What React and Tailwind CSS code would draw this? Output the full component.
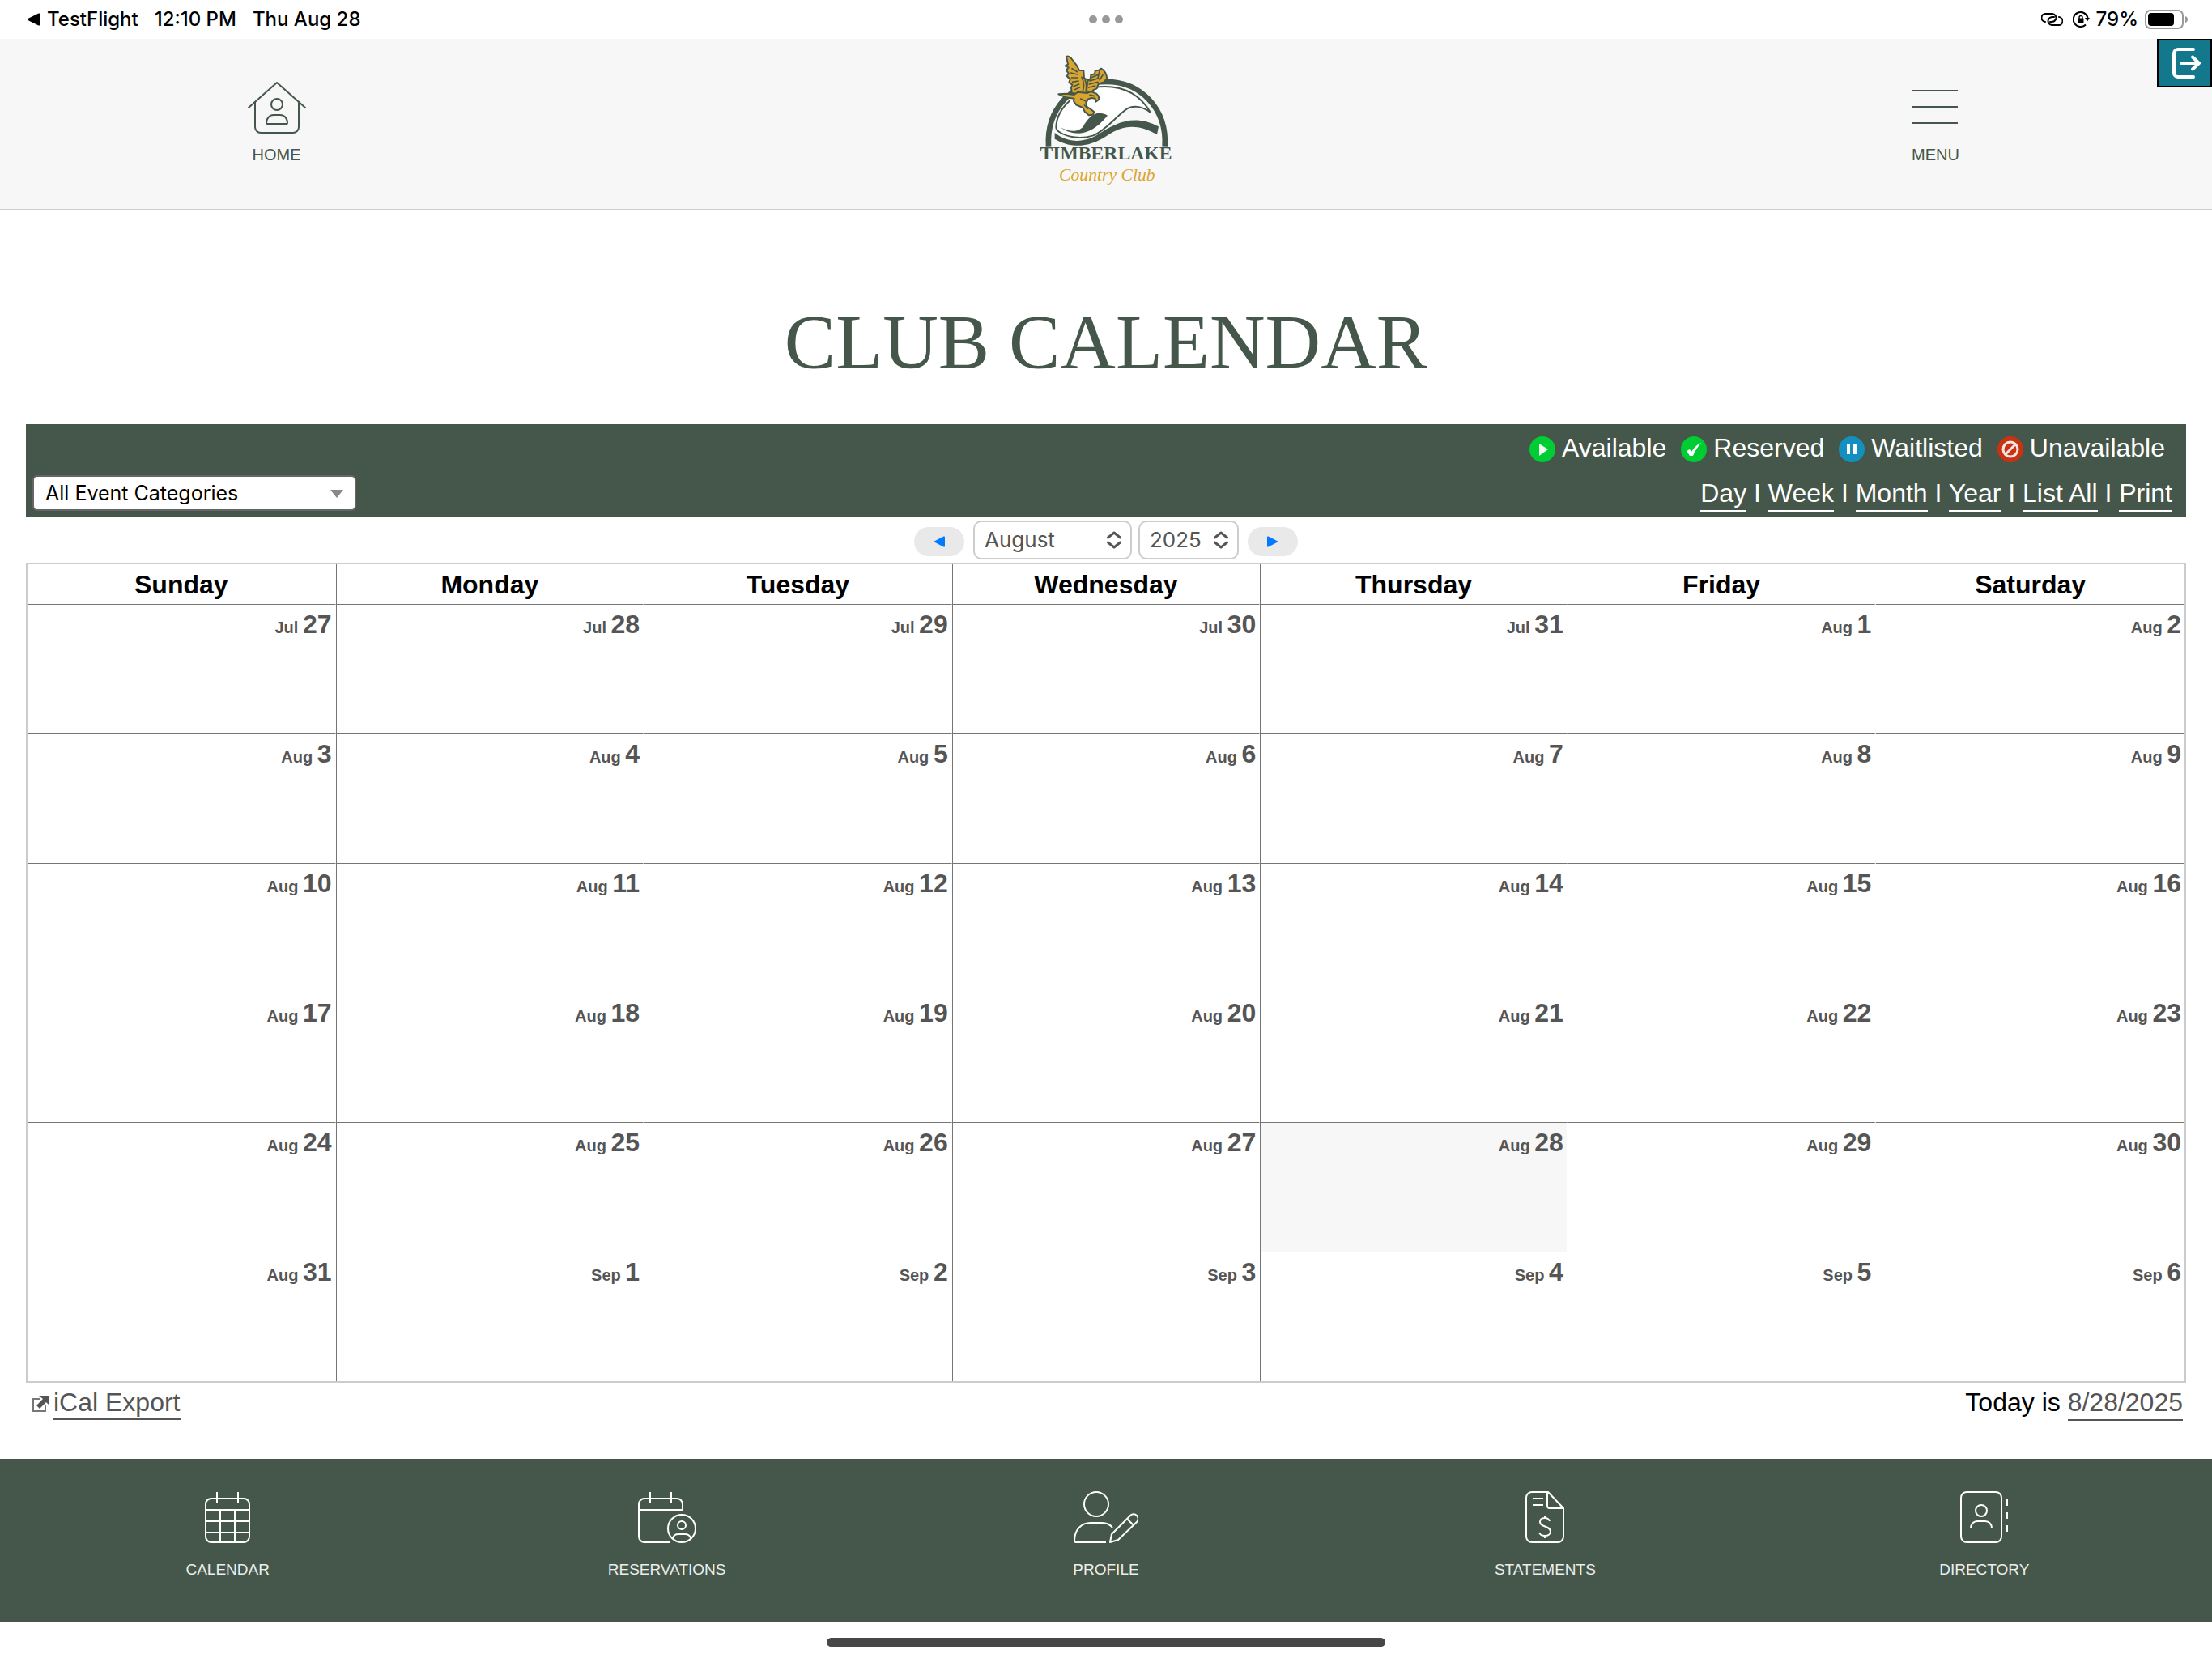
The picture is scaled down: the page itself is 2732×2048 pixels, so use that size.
import React, { useState } from 'react';

const DAYS = ['Sunday', 'Monday', 'Tuesday', 'Wednesday', 'Thursday', 'Friday', 'Saturday'];
const MONTHS = [
  'January', 'February', 'March', 'April', 'May', 'June',
  'July', 'August', 'September', 'October', 'November', 'December',
];
const TODAY = new Date(2025, 7, 28);

// Six weeks, starting on the Sunday before the 1st
const buildWeeks = (year, month) => {
  const first = new Date(year, month, 1);
  const offset = first.getDay();
  return Array.from({ length: 6 }, (_, week) =>
    Array.from({ length: 7 }, (_, day) => new Date(year, month, 1 - offset + week * 7 + day))
  );
};

// Right and left edges of each column
const COLUMN_EDGES = [
  'border-r border-r-white',
  'border-l border-l-[#757575] border-r border-r-white',
  'border-l border-l-[#757575] border-r border-r-white',
  'border-l border-l-[#757575] border-r border-r-white',
  'border-l border-l-[#757575] border-r-2 border-r-white',
  'border-r-2 border-r-white',
  '',
];

const HomeIcon = () => (
  <svg className="w-[72px] h-16" viewBox="0 0 72 64" fill="none" stroke="currentColor" strokeWidth="2" strokeLinecap="round" strokeLinejoin="round">
    <path d="M1 32 36 1l35 31" />
    <path d="M9 25v31a7 7 0 0 0 7 7h40a7 7 0 0 0 7-7V25" />
    <circle cx="36" cy="28" r="7" />
    <path d="M23 51c0-6 4-10 9-10h8c5 0 9 4 9 10a1 1 0 0 1-1 1H24a1 1 0 0 1-1-1z" />
  </svg>
);

const MenuIcon = () => (
  <svg className="w-14 h-16" viewBox="0 0 56 64" stroke="currentColor" strokeWidth="2">
    <path d="M0 11h56M0 31h56M0 51h56" />
  </svg>
);

const ExitIcon = () => (
  <svg className="w-9 h-10" viewBox="0 0 36 40" fill="none" stroke="white" strokeWidth="4" strokeLinecap="round" strokeLinejoin="round">
    <path d="M27 3H8a5 5 0 0 0-5 5v24a5 5 0 0 0 5 5h19" />
    <path d="M12 20h22M26 12.500l8 7.500-8 7.500" />
  </svg>
);

const Logo = () => (
  <svg className="w-[162px] h-[164px]" viewBox="135 202 486 492" role="img" aria-label="Timberlake Country Club">
    <g fill="none" stroke="#45574a">
      <path d="M165 540C157 400 255 301 380 301s224 99 216 239" strokeWidth="20" />
      <path
        d="M245 370c-34 30-50 62-52 98 0 10 4 14 12 19 30 20 80 28 126 13 46-20 70-56 118-94 26-20 62-16 94 9-38-66-104-106-206-94"
        fill="#fff"
        strokeWidth="6"
      />
    </g>
    <g fill="#45574a">
      <path d="M188 490c50 40 112 38 164 4 60-40 130-76 221-27l-6 30c-76-46-134-32-186 4-68 46-136 46-193 12z" />
      <path d="M210 470c30 17 66 20 84-4 18-32 46-64 90-40-24 28-58 64-108 66-26 0-48-7-66-22z" />
    </g>
    <g fill="#d9a52e" stroke="#45574a" strokeWidth="6" strokeLinejoin="round">
      {/* wings */}
      <path d="M231 208q9-4 18 6l20 26 10 18 16 2 2 28 14 6 2 46-44 6-18-4-2-20 4-10-12-8 4-12-12-12 6-10-8-12 8-10-12-6 10-6z" />
      <path d="M306 334l4-36 10-8 2-14 14-4 2-12 14-2 8-6q18 10 22 36l-12 14-20 6-6 18-14 6-6 16z" />
      {/* body, tail, head and talons */}
      <path d="M202 347l28-2 30 4 14-10 34 4 14-6 20 8 8 8 2 14-12 8-2-12-14-2-12 4-8 14 2 14 16 10 12 10-4 10-16 2-14-12-8-16-24-10-10-14 2-10-30-4z" />
    </g>
    <g fill="none" stroke="#45574a" strokeWidth="5" strokeLinecap="round">
      <path d="M252 252l20 12M248 268l24 6M250 286l24 0M254 302l22-4M258 318l20-8M262 330l18-8M288 284c8 16 10 34 4 52M300 294c6 14 6 28 4 40" />
      <path d="M322 286l24-10M318 298l32-10M316 310l32-8M314 322l24-6M354 262l-6 24M366 276l-12 18M284 364l18 8M318 350l18 4M298 388l12 12" />
    </g>
    <text x="378" y="590" textAnchor="middle" fontSize="71" fontWeight="700" fill="#45574a" fontFamily="Liberation Serif, serif">
      TIMBERLAKE
    </text>
    <text x="382" y="667" textAnchor="middle" fontSize="65" fontStyle="italic" fill="#d9a52e" fontFamily="Liberation Serif, serif">
      Country Club
    </text>
  </svg>
);

const StatusBar = () => (
  <div className="h-12 px-[34px] grid grid-cols-3 items-center bg-white text-black text-[24px] leading-7 font-medium font-[Inter,sans-serif]">
    <div className="flex items-center">
      <svg className="w-4 h-4 mr-2" viewBox="0 0 16 16">
        <path d="M1 9.200Q-.5 8 1 6.800L13 .8Q16 0 16 2v12q0 2-3 1.200z" />
      </svg>
      <span className="mr-5">TestFlight</span>
      <span className="mr-5">12:10 PM</span>
      <span>Thu Aug 28</span>
    </div>
    <div className="flex justify-center gap-[6px]">
      <span className="size-[10px] rounded-full bg-[#999]" />
      <span className="size-[10px] rounded-full bg-[#999]" />
      <span className="size-[10px] rounded-full bg-[#999]" />
    </div>
    <div className="-mr-1 flex items-center justify-end">
      <svg className="w-[27px] h-4 mr-3" viewBox="0 0 27 16" fill="none" stroke="black" strokeWidth="2" strokeLinecap="round">
        <path d="M5 11a5 5 0 0 1 1-10h8a5 5 0 0 1 4 7c-1 2-2 3-5 3h-2" />
        <path d="M22 5a5 5 0 0 1-1 10h-8a5 5 0 0 1-4-7c1-2 2-3 5-3h2" />
      </svg>
      <svg className="w-[21px] h-5 mr-2" viewBox="0 0 21 20" fill="none" stroke="black" strokeWidth="2">
        <path d="M16 16.500A9 9 0 1 1 18.500 8" />
        <path d="M15 8h6l-3 4.500z" fill="black" stroke="none" />
        <rect x="6.500" y="8.500" width="7" height="6" rx="1" fill="black" stroke="none" />
        <path d="M8 9V7.500a2 2 0 0 1 4 0V9" strokeWidth="1.400" />
      </svg>
      <span className="mr-2">79%</span>
      <svg className="w-[53px] h-6" viewBox="0 0 53 24">
        <rect x="1" y="1" width="46" height="22" rx="6" fill="none" stroke="#999" strokeWidth="2" />
        <rect x="4" y="4" width="32" height="16" rx="4" />
        <path d="M50 8q3 1 3 4t-3 4z" fill="#999" />
      </svg>
    </div>
  </div>
);

const Header = () => (
  <header className="relative bg-[#f7f7f7] border-b-2 border-[#ccc] text-[#45574a] text-[20px] leading-6">
    <div className="grid grid-cols-[1fr_2fr_1fr] items-start h-[210px] pt-5">
      <a href="#home" className="justify-self-center mt-[33px] flex flex-col items-center gap-[14px]">
        <HomeIcon />
        HOME
      </a>
      <a href="#club" className="justify-self-center">
        <Logo />
      </a>
      <button type="button" className="justify-self-center mt-[33px] flex flex-col items-center gap-[14px]">
        <MenuIcon />
        MENU
      </button>
    </div>
    <button
      type="button"
      aria-label="Exit"
      className="absolute top-0 right-0 w-[68px] h-[60px] pl-1 flex items-center justify-center bg-[#14788c] border-2 border-black"
    >
      <ExitIcon />
    </button>
  </header>
);

const LEGEND = [
  {
    label: 'Available',
    color: '#00cc33',
    mark: <path d="M12 9v15l11-8z" fill="#f0fff0" />,
  },
  {
    label: 'Reserved',
    color: '#00cc33',
    mark: <path d="M7 18l4-2 2 3c3-5 7-9 12-11-4 5-8 10-10 16h-4z" fill="#fff" />,
  },
  {
    label: 'Waitlisted',
    color: '#1490c0',
    mark: <path d="M10 10h4v12h-4zM18 10h4v12h-4z" fill="#fff" />,
  },
  {
    label: 'Unavailable',
    color: '#c93312',
    mark: (
      <g fill="none" stroke="#f6e6e2" strokeWidth="3">
        <circle cx="16" cy="16" r="9" />
        <path d="M10 22 22 10" />
      </g>
    ),
  },
];

const VIEWS = ['Day', 'Week', 'Month', 'Year', 'List All', 'Print'];

const Toolbar = () => (
  <div className="h-[115px] pl-2 pr-[17px] flex items-end justify-between bg-[#45574a] text-white">
    <div className="relative w-[400px] mb-2">
      <select
        aria-label="Event category"
        className="block w-full h-11 pl-[14px] appearance-none rounded-md border-2 border-[#666] bg-white text-black text-[25px] leading-8 font-[Inter,sans-serif]"
      >
        <option>All Event Categories</option>
      </select>
      <svg className="absolute right-4 top-[18px] w-4 h-[10px] pointer-events-none" viewBox="0 0 16 10" fill="#888">
        <path d="M0 0h16L8 10z" />
      </svg>
    </div>
    <div className="h-full flex flex-col items-end text-[32px] leading-9">
      <ul className="flex gap-[18px] pt-[11px] pr-[9px]">
        {LEGEND.map(({ label, color, mark }) => (
          <li key={label} className="flex items-center gap-2">
            <svg className="size-8 mt-1" viewBox="0 0 32 32">
              <circle cx="16" cy="16" r="16" fill={color} />
              {mark}
            </svg>
            {label}
          </li>
        ))}
      </ul>
      <nav className="mt-5">
        {VIEWS.map((view, i) => (
          <React.Fragment key={view}>
            {i > 0 && ' I '}
            <a href="#view" className="border-b-2 border-white pb-[3px]">{view}</a>
          </React.Fragment>
        ))}
      </nav>
    </div>
  </div>
);

const Chevrons = () => (
  <svg className="absolute right-[13px] top-[13px] w-[18px] h-[22px] pointer-events-none" viewBox="0 0 18 22" fill="none" stroke="#555" strokeWidth="3" strokeLinecap="round" strokeLinejoin="round">
    <path d="M1.500 8 9 2l7.500 6M1.500 14 9 20l7.500-6" />
  </svg>
);

const SELECT_CLASS =
  'block w-full h-12 pl-3 appearance-none rounded-[10px] border-2 border-[#ccc] bg-white text-[#555] text-[26px] leading-8 font-[Inter,sans-serif]';

const MonthNav = ({ year, month, onChange }) => {
  const step = (n) => {
    const d = new Date(year, month + n, 1);
    onChange(d.getFullYear(), d.getMonth());
  };

  return (
    <div className="h-14 pt-1 flex items-start justify-center">
      <button type="button" aria-label="Previous month" onClick={() => step(-1)} className="w-[62px] h-9 mt-2 mr-[11px] flex items-center justify-center rounded-full bg-[#e9e9e9]">
        <svg className="w-[14px] h-[14px]" viewBox="0 0 14 14" fill="#007aff">
          <path d="M0 7 12.500.500Q14 0 14 1.500v11q0 1.500-1.500 1z" />
        </svg>
      </button>
      <div className="relative w-[196px] mr-2">
        <select aria-label="Month" value={month} onChange={(e) => onChange(year, Number(e.target.value))} className={SELECT_CLASS}>
          {MONTHS.map((name, i) => (
            <option key={name} value={i}>{name}</option>
          ))}
        </select>
        <Chevrons />
      </div>
      <div className="relative w-[124px] mr-[11px]">
        <select aria-label="Year" value={year} onChange={(e) => onChange(Number(e.target.value), month)} className={SELECT_CLASS}>
          {[2024, 2025, 2026].map((y) => (
            <option key={y} value={y}>{y}</option>
          ))}
        </select>
        <Chevrons />
      </div>
      <button type="button" aria-label="Next month" onClick={() => step(1)} className="w-[62px] h-9 mt-2 flex items-center justify-center rounded-full bg-[#e9e9e9]">
        <svg className="w-[14px] h-[14px]" viewBox="0 0 14 14" fill="#007aff">
          <path d="M14 7 1.500.500Q0 0 0 1.500v11q0 1.500 1.500 1z" />
        </svg>
      </button>
    </div>
  );
};

const MonthGrid = ({ year, month }) => (
  <table className="w-full table-fixed border-separate border-spacing-0 border-2 border-[#ccc]">
    <thead>
      <tr>
        {DAYS.map((day, i) => (
          <th key={day} className={`h-[49px] p-0 text-center text-[32px] leading-9 font-bold text-black ${COLUMN_EDGES[i]}`}>
            {day}
          </th>
        ))}
      </tr>
    </thead>
    <tbody>
      {buildWeeks(year, month).map((week) => (
        <tr key={week[0].toISOString()}>
          {week.map((date, i) => (
            <td
              key={date.toISOString()}
              className={`h-40 p-0 pt-[6px] pr-1 align-top text-right font-bold text-[#555] border-t border-t-[#757575] bg-clip-padding ${COLUMN_EDGES[i]} ${
                date.getTime() === TODAY.getTime() ? 'bg-[#f7f7f7]' : ''
              }`}
            >
              <a href="#day" className="text-[20px] leading-9">
                {MONTHS[date.getMonth()].slice(0, 3)} <span className="text-[32px]">{date.getDate()}</span>
              </a>
            </td>
          ))}
        </tr>
      ))}
    </tbody>
  </table>
);

const TABS = [
  {
    label: 'CALENDAR',
    icon: (
      <svg className="w-14 h-16" viewBox="0 0 56 64">
        <rect x="1" y="9" width="54" height="54" rx="7" />
        <path d="M15 1v14M41 1v14M1 23h54M1 37h54M1 51h54M19 23v40M37 23v40" />
      </svg>
    ),
  },
  {
    label: 'RESERVATIONS',
    icon: (
      <svg className="w-[72px] h-16" viewBox="0 0 72 64">
        <path d="M40 63H8a7 7 0 0 1-7-7V16a7 7 0 0 1 7-7h40a7 7 0 0 1 7 7v7H1M15 1v14M41 1v14" />
        <circle cx="54" cy="46" r="17" />
        <circle cx="54" cy="42" r="5" />
        <path d="M43 58c1-4 4-5 7-5h8c3 0 6 1 7 5" />
      </svg>
    ),
  },
  {
    label: 'PROFILE',
    icon: (
      <svg className="w-20 h-16" viewBox="0 0 80 64">
        <circle cx="28" cy="16" r="15" />
        <path d="M40 63H3a2 2 0 0 1-2-2c0-14 9-22 20-22h14c6 0 10 2 13 6" />
        <path d="M45 63l2-10 23-23a5 5 0 0 1 8 8L55 60zM66 34l8 8" />
      </svg>
    ),
  },
  {
    label: 'STATEMENTS',
    icon: (
      <svg className="w-12 h-16" viewBox="0 0 48 64">
        <path d="M28 1H8a7 7 0 0 0-7 7v48a7 7 0 0 0 7 7h32a7 7 0 0 0 7-7V21zM27 1v17a3 3 0 0 0 3 3h17M9 9h13M9 17h13" />
        <path d="M30 37c-1-3-3-4-6-4-4 0-6 2-6 5 0 7 13 4 13 12 0 3-3 5-7 5s-6-1-7-4M24 30v3M24 55v3" />
      </svg>
    ),
  },
  {
    label: 'DIRECTORY',
    icon: (
      <svg className="w-[60px] h-16" viewBox="0 0 60 64">
        <rect x="1" y="1" width="50" height="62" rx="7" />
        <circle cx="26" cy="24" r="7" />
        <path d="M13 46c0-6 4-9 8-9h10c4 0 8 3 8 9M58 10v8M58 26v8M58 42v8" />
      </svg>
    ),
  },
];

const TabBar = () => (
  <nav className="h-[202px] px-[10px] pt-10 grid grid-cols-5 items-start bg-[#45574a] text-white text-[19px] leading-6">
    {TABS.map(({ label, icon }) => (
      <a
        key={label}
        href="#tab"
        className="flex flex-col items-center gap-[21px] [&_svg]:fill-none [&_svg]:stroke-white [&_svg]:stroke-2 [&_svg]:[stroke-linejoin:round]"
      >
        {icon}
        <span className="text-white/90">{label}</span>
      </a>
    ))}
  </nav>
);

const App = () => {
  const [shown, setShown] = useState({ year: 2025, month: 7 });

  return (
    <div className="min-h-screen flex flex-col bg-white font-['Liberation_Sans',Arial,sans-serif]">
      <StatusBar />
      <Header />

      <main className="px-8 flex-1">
        <h1 className="pt-[115px] pb-[53px] text-center text-[95px] leading-[96px] text-[#45574a] font-['Liberation_Serif',serif]">
          CLUB CALENDAR
        </h1>
        <Toolbar />
        <MonthNav year={shown.year} month={shown.month} onChange={(year, month) => setShown({ year, month })} />
        <MonthGrid year={shown.year} month={shown.month} />

        <div className="pt-[6px] pl-2 pr-1 flex items-start justify-between text-[32px] leading-9 text-black">
          <div className="flex items-center">
            <svg className="w-[21px] h-5 mr-[5px]" viewBox="0 0 21 20" fill="none" stroke="#555">
              <path d="M9 4H1v15h15v-7" stroke="#777" strokeWidth="2" />
              <path d="M8 0h13v12l-4-4-8 8-4-4 8-8z" fill="#555" stroke="none" />
            </svg>
            <a href="#ical" className="h-10 border-b-2 border-[#555] text-[#555]">iCal Export</a>
          </div>
          <p>
            Today is <a href="#today" className="pb-[3px] border-b-2 border-[#555] text-[#555]">8/28/2025</a>
          </p>
        </div>
      </main>

      <TabBar />
      <div className="h-11 flex items-center justify-center">
        <div className="w-[690px] h-[11px] mt-1 rounded-full bg-[#474747]" />
      </div>
    </div>
  );
};

export default App;
